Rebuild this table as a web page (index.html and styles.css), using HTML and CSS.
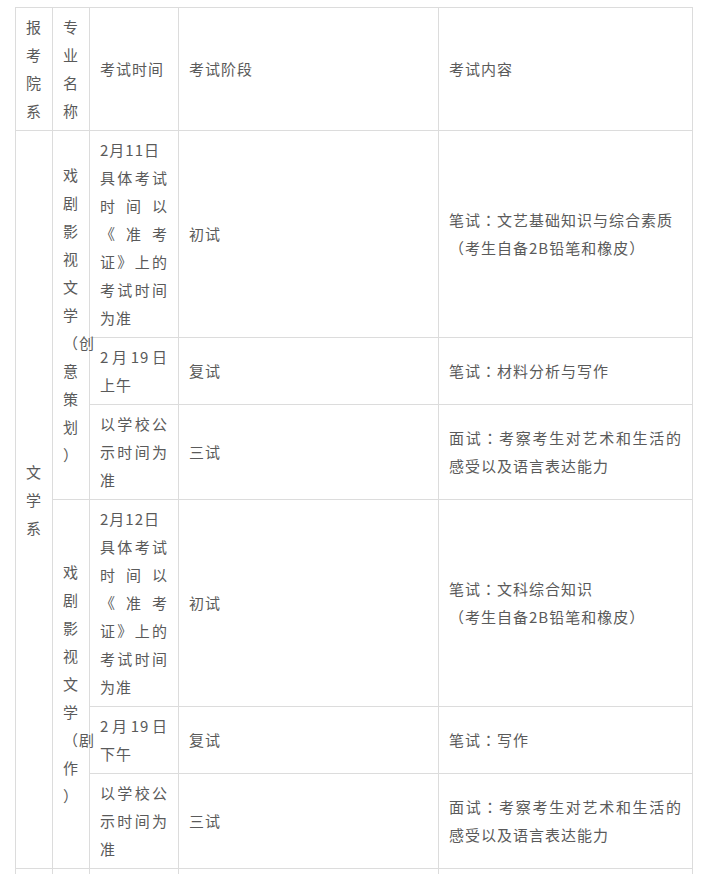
FILE: index.html
```html
<!DOCTYPE html>
<html lang="zh-CN">
<head>
<meta charset="utf-8">
<title>考试安排</title>
<link rel="stylesheet" href="styles.css">
</head>
<body>
<div class="page">
<table class="exam">
  <colgroup>
    <col class="c-dept">
    <col class="c-major">
    <col class="c-time">
    <col class="c-stage">
    <col class="c-content">
  </colgroup>
  <tbody>
    <tr>
      <td>报考院系</td>
      <td>专业名称</td>
      <td>考试时间</td>
      <td>考试阶段</td>
      <td>考试内容</td>
    </tr>
    <tr class="r7">
      <td rowspan="6">文学系</td>
      <td rowspan="3">戏<br>剧<br>影<br>视<br>文<br>学<br><span class="paren">（创</span><br>意<br>策<br>划<br>）</td>
      <td>2月11日<br>具体考试时间以《准考证》上的考试时间为准</td>
      <td>初试</td>
      <td>笔试<span class="colon" lang="zh-Hant">：</span>文艺基础知识与综合素质<br>（考生自备2B铅笔和橡皮）</td>
    </tr>
    <tr>
      <td>2月19日上午</td>
      <td>复试</td>
      <td>笔试<span class="colon" lang="zh-Hant">：</span>材料分析与写作</td>
    </tr>
    <tr>
      <td>以学校公示时间为准</td>
      <td>三试</td>
      <td><span class="line-full">面试<span class="colon" lang="zh-Hant">：</span>考察考生对艺术和生活的</span>感受以及语言表达能力</td>
    </tr>
    <tr>
      <td rowspan="3">戏<br>剧<br>影<br>视<br>文<br>学<br><span class="paren">（剧</span><br>作<br>）</td>
      <td>2月12日<br>具体考试时间以《准考证》上的考试时间为准</td>
      <td>初试</td>
      <td>笔试<span class="colon" lang="zh-Hant">：</span>文科综合知识<br>（考生自备2B铅笔和橡皮）</td>
    </tr>
    <tr>
      <td>2月19日下午</td>
      <td>复试</td>
      <td>笔试<span class="colon" lang="zh-Hant">：</span>写作</td>
    </tr>
    <tr>
      <td>以学校公示时间为准</td>
      <td>三试</td>
      <td><span class="line-full">面试<span class="colon" lang="zh-Hant">：</span>考察考生对艺术和生活的</span>感受以及语言表达能力</td>
    </tr>
    <tr class="tail">
      <td>&nbsp;</td>
      <td>&nbsp;</td>
      <td>&nbsp;</td>
      <td>&nbsp;</td>
      <td>&nbsp;</td>
    </tr>
  </tbody>
</table>
</div>
</body>
</html>
```

FILE: styles.css
```css
html, body {
  margin: 0;
  padding: 0;
  background: #ffffff;
}

.page {
  padding: 7px 0 0 15px;
}

.exam {
  border-collapse: collapse;
  table-layout: fixed;
  width: 677px;
  font-family: "Noto Sans CJK SC", "Liberation Sans", sans-serif;
  font-size: 15px;
  letter-spacing: 1px;
  line-height: 28px;
  color: #5a5a5a;
}

.c-dept { width: 37px; }
.c-major { width: 37px; }
.c-time { width: 89px; }
.c-stage { width: 260px; }
.c-content { width: 254px; }

.exam td {
  border: 1px solid #dcdcdc;
  padding: 5px 10px;
  vertical-align: middle;
  text-align: justify;
  word-wrap: normal;
  overflow: visible;
}

.paren {
  white-space: nowrap;
}

.colon {
  font-family: "Noto Sans CJK TC", "Noto Sans CJK SC", sans-serif;
  line-height: 28px;
}

.line-full {
  display: block;
  text-align: justify;
  text-align-last: justify;
}

.tail td {
  height: 60px;
}
```
